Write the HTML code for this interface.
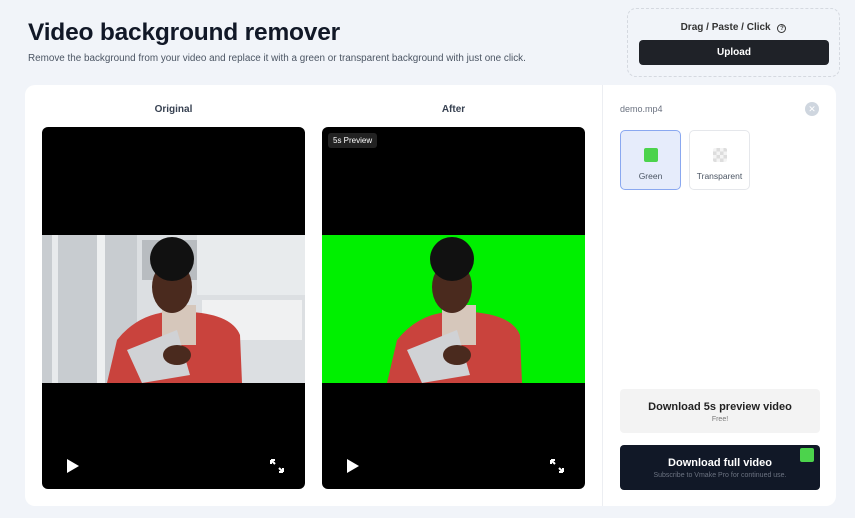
<!DOCTYPE html>
<html><head><meta charset="utf-8"><style>
*{box-sizing:border-box;margin:0;padding:0}
body{width:855px;height:518px;background:#f1f4f9;font-family:"Liberation Sans",sans-serif;position:relative;overflow:hidden;color:#161b26}
h1{position:absolute;left:28px;top:19px;font-size:24.5px;font-weight:bold;color:#111827;letter-spacing:-0.2px}
.sub{position:absolute;left:28px;top:53px;font-size:9.9px;color:#4b5563}
.drop{position:absolute;left:627px;top:8px;width:213px;height:69px;border:1px dashed #d5d9e0;border-radius:9px}
.drop .t{position:absolute;top:13px;width:100%;text-align:center;font-size:10px;font-weight:bold;color:#333}
.drop .b{position:absolute;left:11px;top:31px;width:190px;height:25px;background:#1f2228;border-radius:4px;color:#fff;font-size:10px;font-weight:bold;text-align:center;line-height:25px}
.card{position:absolute;left:25px;top:85px;width:811px;height:421px;background:#fff;border-radius:10px}
.div{position:absolute;left:577px;top:0;width:1px;height:421px;background:#eceef2}
.lbl{position:absolute;top:19px;font-size:10px;font-weight:bold;color:#374151;width:263px;text-align:center}
.vid{position:absolute;top:42px;width:263px;height:362px;background:#000;border-radius:6px;overflow:hidden}
.vid svg.img{position:absolute;left:0;top:108px}
.badge{position:absolute;left:6px;top:6px;background:#222;color:#fff;font-size:8px;padding:3px 5px;border-radius:3px}
.play{position:absolute;left:25px;top:332px;width:0;height:0;border-left:12px solid #fff;border-top:7px solid transparent;border-bottom:7px solid transparent}
.vid svg.fs{position:absolute;left:227px;top:331px}
.file{position:absolute;left:595px;top:19px;font-size:9px;color:#6b7280}
.x{position:absolute;left:780px;top:17px;width:14px;height:14px;border-radius:50%;background:#cfd6df;color:#fff;font-size:9px;text-align:center;line-height:14px}
.opt{position:absolute;top:45px;width:61px;height:60px;border:1px solid #e5e7eb;border-radius:5px;font-size:8.5px;color:#4b5563;text-align:center}
.opt .sw{position:absolute;left:23px;top:17px;width:14px;height:14px;border-radius:2px}
.opt span{position:absolute;left:0;width:100%;top:40px}
.d1{position:absolute;left:595px;top:304px;width:200px;height:44px;background:#f3f3f3;border-radius:4px;text-align:center}
.d2{position:absolute;left:595px;top:360px;width:200px;height:45px;background:#111827;border-radius:4px;text-align:center}
</style></head><body>
<h1>Video background remover</h1>
<div class="sub">Remove the background from your video and replace it with a green or transparent background with just one click.</div>
<div class="drop"><div class="t">Drag / Paste / Click <span style="display:inline-block;width:9px;height:9px;border:1px solid #333;border-radius:50%;font-size:6px;line-height:8px;vertical-align:0;margin-left:4px">?</span></div><div class="b">Upload</div></div>
<div class="card">
<div class="div"></div>
<div class="lbl" style="left:17px">Original</div>
<div class="lbl" style="left:297px">After</div>
<div class="vid" style="left:17px">
<svg class="img" width="263" height="148"><rect width="263" height="148" fill="#dcdfe2"/><rect x="0" y="0" width="95" height="148" fill="#c8ccd0"/><rect x="100" y="5" width="60" height="40" fill="#b8bcc0"/><rect x="155" y="0" width="108" height="60" fill="#e8ebed"/><rect x="160" y="65" width="100" height="40" fill="#f0f1f2"/><rect x="10" y="0" width="6" height="148" fill="#e8eaec"/><rect x="55" y="0" width="8" height="148" fill="#eef0f1"/>
<g id="p"><path d="M65 148 L75 105 Q95 80 125 77 L150 77 Q190 80 198 100 L200 148Z" fill="#c9433d"/><rect x="120" y="70" width="34" height="40" fill="#d6c7bb"/><ellipse cx="130" cy="52" rx="20" ry="26" fill="#4a2a1e"/><circle cx="130" cy="24" r="22" fill="#111"/><path d="M85 115 L135 95 L148 140 L100 148Z" fill="#d0d2d5"/><ellipse cx="135" cy="120" rx="14" ry="10" fill="#4a2a1e"/></g></svg>
<div class="play"></div>
<svg class="fs" width="16" height="16" fill="none" stroke="#fff" stroke-width="2"><path d="M2 2l4 4M2 2h4M2 2v4M14 14l-4-4M14 14h-4M14 14v-4"/></svg>
</div>
<div class="vid" style="left:297px">
<svg class="img" width="263" height="148"><rect width="263" height="148" fill="#00f000"/><use href="#p"/></svg>
<div class="badge">5s Preview</div>
<div class="play"></div>
<svg class="fs" width="16" height="16" fill="none" stroke="#fff" stroke-width="2"><path d="M2 2l4 4M2 2h4M2 2v4M14 14l-4-4M14 14h-4M14 14v-4"/></svg>
</div>
<div class="file">demo.mp4</div>
<div class="x">✕</div>
<div class="opt" style="left:595px;background:#e6ecfb;border-color:#8aa8f0"><div class="sw" style="background:#4cd34c"></div><span>Green</span></div>
<div class="opt" style="left:664px"><div class="sw" style="background:repeating-conic-gradient(#ddd 0 25%,#f4f4f4 0 50%) 0 0/7px 7px"></div><span>Transparent</span></div>
<div class="d1"><div style="font-size:11px;font-weight:bold;color:#222;margin-top:12px">Download 5s preview video</div><div style="font-size:7px;color:#777;margin-top:3px">Free!</div></div>
<div class="d2"><div style="position:absolute;right:6px;top:3px;width:14px;height:14px;background:#4cd34c;border-radius:2px"></div><div style="font-size:11px;font-weight:bold;color:#fff;margin-top:12px">Download full video</div><div style="font-size:7px;color:#6b7280;margin-top:3px">Subscribe to Vmake Pro for continued use.</div></div>
</div>
</body></html>
